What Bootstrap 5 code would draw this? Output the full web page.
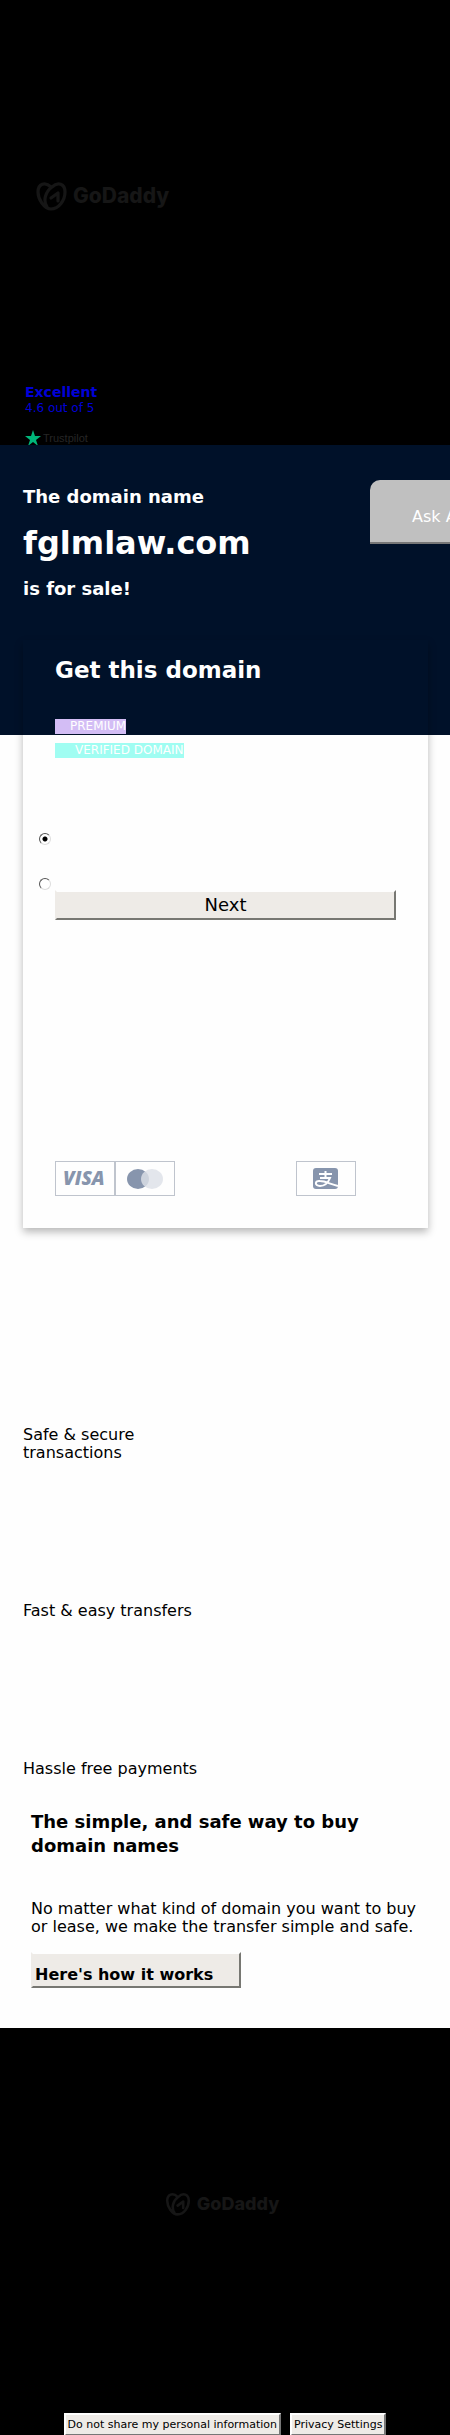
<!DOCTYPE html>
<html lang="en">
<head>
<meta charset="utf-8">
<meta name="viewport" content="width=device-width, initial-scale=1">
<title>fglmlaw.com is for sale</title>
<link href="https://cdn.jsdelivr.net/npm/bootstrap@5.3.0/dist/css/bootstrap.min.css" rel="stylesheet">
<style>
body{font-family:"DejaVu Sans",sans-serif;font-size:16px;line-height:18px;color:#000;background:#fefefe;overflow-x:hidden}
.site-head{background:#000;height:445px;padding:181px 25px 0 36px}
.brand{color:#161616;font-family:Inter,sans-serif;font-weight:800;font-size:21px;line-height:30px;text-decoration:none;gap:6px}
.brand svg{width:31px;height:30px}
.site-foot .brand{font-size:18px;line-height:24px;margin-right:6px}
.site-foot .brand svg{width:26px;height:24px}
.trust{color:#0000d8;font-size:12px;line-height:16px;margin-top:173px;margin-left:-11px;text-decoration:none}
.trust strong{font-size:14px}
.trust-logo{font-family:"Liberation Sans",sans-serif;font-size:11px;color:#262626;margin-top:14px;gap:2px}
.hero{background:#001129;color:#fff;height:290px;padding:41px 23px 0}
.hero h1{font-size:18px;line-height:22px;font-weight:700;margin:0}
.hero h1 strong{font-size:32px;line-height:40px;margin:15px 0 15px}
.ask{top:35px;right:0;width:80px;height:64px;background:#c0c0c0;color:#fff;border:0;border-bottom:2px solid #777;border-radius:10px 0 0 0;padding:12px 0 0 42px;overflow:hidden;text-align:left;white-space:nowrap;line-height:20px}
.offer{margin:-95px 22px 0 23px;padding:16px 32px 32px;height:588px;box-shadow:0 4px 8px rgba(0,0,0,.28)}
.offer h2{color:#fff;font-size:23px;line-height:28px;font-weight:700;margin:0 0 35px}
.tag{color:#fff;font-size:12px;line-height:15px}
.tag-premium{background:#d3bdf5;padding-left:15px}
.tag-verified{background:#a0fdf2;padding-left:20px;margin-top:9px}
.choices{margin:75px 0 0 -16px;gap:33px}
.choices input{appearance:none;width:12px;height:12px;margin:0;border:1px solid;border-color:#555 #ddd #ddd #555;border-radius:50%;background:#fff}
.choices input:checked{background:radial-gradient(circle,#000 2px,#fff 3px)}
.classic{background:#eeebe7;color:#000;border:2px solid;border-color:#fefefe #777772 #777772 #eeebe7;padding:0}
.next{font-size:18px;line-height:26px}
.pay span{width:60px;height:35px;border:1px solid #bfc4cd}
.pay svg{width:58px;height:33px;display:block}
.perks{padding:198px 23px 0}
.perks p{width:180px;margin:0 0 140px}
.perks p:first-child{width:150px}
.perks p:last-child{margin:0}
.intro{padding:32px 31px 40px}
.intro h2{font-size:18px;line-height:24px;font-weight:700;margin:0 0 42px}
.intro p{margin:0 0 16px}
.how{font-weight:700;font-size:16px;line-height:18px;padding:12px 26px 2px 2px}
.site-foot{background:#000;padding:164px 20px 0}
.legal{margin-top:197px;gap:9px}
.legal button{font-size:11px;line-height:17px;padding:1px 2px;border-color:#fff #777 #777 #fff}
</style>
</head>
<body>
<svg class="d-none" aria-hidden="true"><symbol id="mark" viewBox="0 0 31 30"><g fill="none" stroke="#161616" stroke-width="3.2" stroke-linecap="round" stroke-linejoin="round"><path d="M15 6C9 0 2 3 2 11c0 7 6 17 13 17 8 0 14-9 14-17 0-8-7-11-13-5-7 5-9 14-5 20"/><path d="M15 17l7-5v8"/></g></symbol></svg>
<header class="site-head d-flex flex-column align-items-start">
  <a class="brand d-flex align-items-center" href="#"><svg aria-hidden="true"><use href="#mark"/></svg>GoDaddy</a>
  <a class="trust d-flex flex-column" href="#"><strong>Excellent</strong><span>4.6 out of 5</span>
    <span class="trust-logo d-flex align-items-center"><svg width="16" height="16" viewBox="0 0 16 16" aria-hidden="true"><path fill="#00b67a" d="M8 0l2 6h6l-5 4 2 6-5-4-5 4 2-6-5-4h6z"/></svg>Trustpilot</span></a>
</header>
<main>
<section class="hero position-relative">
  <h1>The domain name<strong class="d-block">fglmlaw.com</strong>is for sale!</h1>
  <button class="ask position-absolute" type="button">Ask A</button>
</section>
<section class="offer position-relative d-flex flex-column">
  <h2>Get this domain</h2>
  <span class="tag tag-premium align-self-start">PREMIUM</span>
  <span class="tag tag-verified align-self-start">VERIFIED DOMAIN</span>
  <div class="choices d-flex flex-column">
    <input type="radio" name="plan" aria-label="Buy now" checked>
    <input type="radio" name="plan" aria-label="Lease to own">
  </div>
  <button class="classic next" type="button">Next</button>
  <div class="pay d-flex mt-auto">
    <span><svg viewBox="0 0 58 33" role="img" aria-label="Visa"><text x="7" y="23" font-family="Open Sans" font-weight="800" font-style="italic" font-size="19" fill="#8795ad">VISA</text></svg></span>
    <span><svg viewBox="0 0 58 33" role="img" aria-label="Mastercard"><ellipse cx="22" cy="17" rx="11" ry="10" fill="#8795ad"/><ellipse cx="36" cy="17" rx="11" ry="10" fill="#dde1e8" fill-opacity=".82"/></svg></span>
    <span class="ms-auto"><svg viewBox="0 0 58 33" role="img" aria-label="Alipay"><rect x="16" y="6" width="25" height="21" rx="3" fill="#8795ad"/><path d="M22 12h13M28.500 9v6M23 16h10c-2 5-6 8-10 8-6 0-5-6 0-5 5 0 10 3 18 5" fill="none" stroke="#fff" stroke-width="2"/></svg></span>
    <div class="px-3 me-2"></div>
  </div>
</section>
<section class="perks"><p>Safe &amp; secure transactions</p><p>Fast &amp; easy transfers</p><p>Hassle free payments</p></section>
<section class="intro">
  <h2>The simple, and safe way to buy domain names</h2>
  <p>No matter what kind of domain you want to buy or lease, we make the transfer simple and safe.</p>
  <button class="classic how" type="button">Here's how it works</button>
</section>
</main>
<footer class="site-foot d-flex flex-column align-items-center">
  <a class="brand d-flex align-items-center" href="#"><svg aria-hidden="true"><use href="#mark"/></svg>GoDaddy</a>
  <div class="legal d-flex justify-content-center"><button class="classic" type="button">Do not share my personal information</button><button class="classic" type="button">Privacy Settings</button></div>
</footer>
<script src="https://cdn.jsdelivr.net/npm/bootstrap@5.3.0/dist/js/bootstrap.bundle.min.js"></script>
</body>
</html>
